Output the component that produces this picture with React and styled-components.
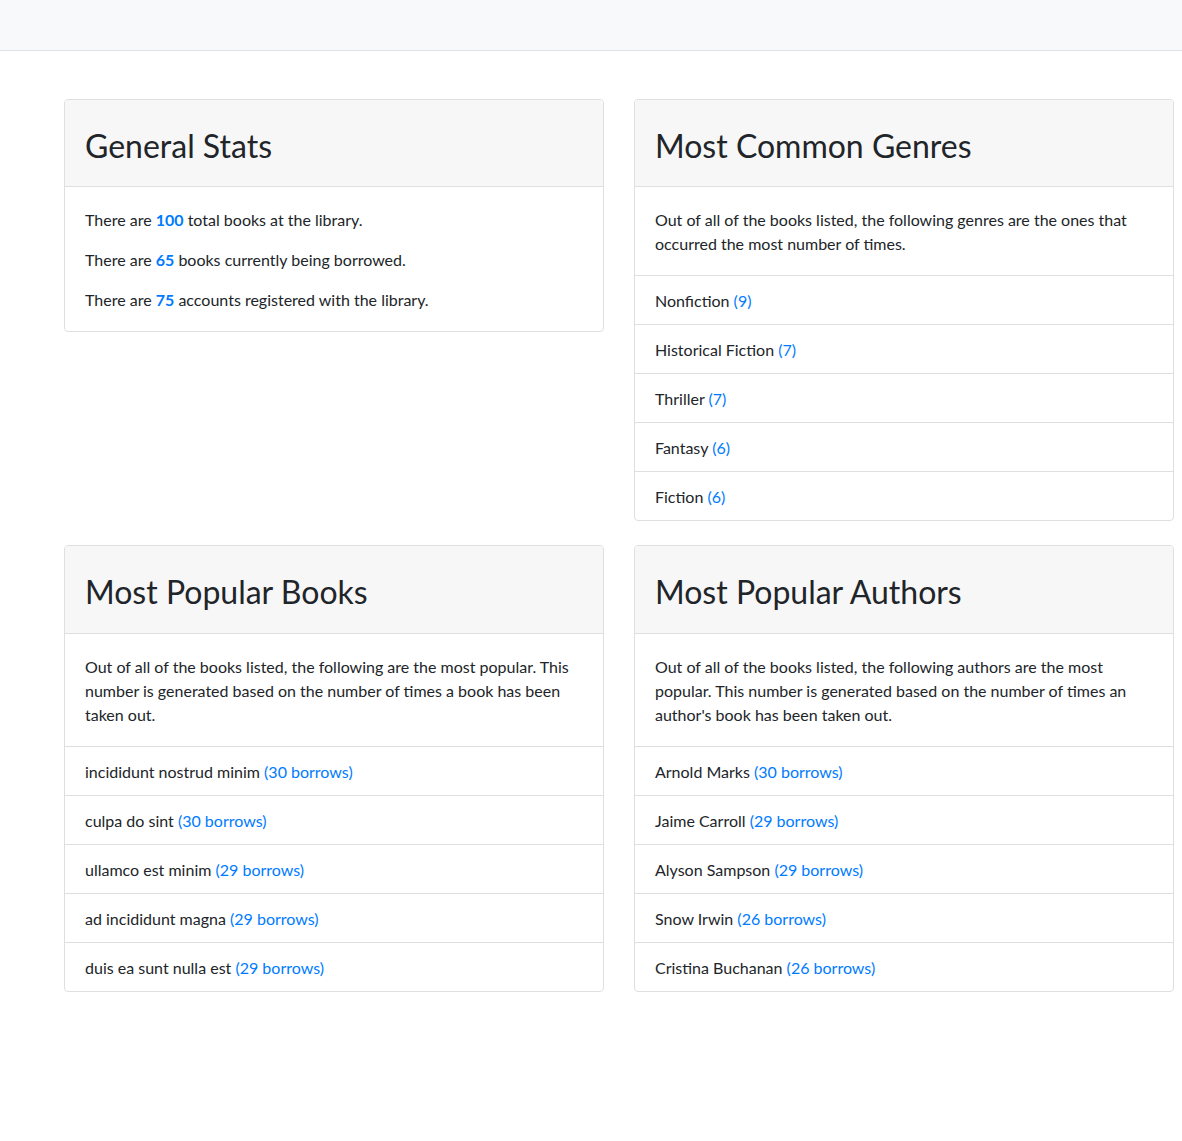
import React from 'react';
import styled, { createGlobalStyle } from 'styled-components';

const genres = [
  { name: 'Nonfiction', count: 9 },
  { name: 'Historical Fiction', count: 7 },
  { name: 'Thriller', count: 7 },
  { name: 'Fantasy', count: 6 },
  { name: 'Fiction', count: 6 },
];

const books = [
  { name: 'incididunt nostrud minim', count: 30 },
  { name: 'culpa do sint', count: 30 },
  { name: 'ullamco est minim', count: 29 },
  { name: 'ad incididunt magna', count: 29 },
  { name: 'duis ea sunt nulla est', count: 29 },
];

const authors = [
  { name: 'Arnold Marks', count: 30 },
  { name: 'Jaime Carroll', count: 29 },
  { name: 'Alyson Sampson', count: 29 },
  { name: 'Snow Irwin', count: 26 },
  { name: 'Cristina Buchanan', count: 26 },
];

const App = () => {
  return (
    <>
      <GlobalStyle />
      <Navbar />
      <Main>
        <Card>
          <CardHeader>
            <Title>General Stats</Title>
          </CardHeader>
          <CardBody>
            <Text>
              There are <Strong>100</Strong> total books at the library.
            </Text>
            <Text>
              There are <Strong>65</Strong> books currently being borrowed.
            </Text>
            <Text>
              There are <Strong>75</Strong> accounts registered with the library.
            </Text>
          </CardBody>
        </Card>

        <Card>
          <CardHeader>
            <Title>Most Common Genres</Title>
          </CardHeader>
          <CardBody>
            <Text>
              Out of all of the books listed, the following genres are the ones that occurred the
              most number of times.
            </Text>
          </CardBody>
          <List>
            {genres.map((g) => (
              <Item key={g.name}>
                {g.name} <Count>({g.count})</Count>
              </Item>
            ))}
          </List>
        </Card>

        <Card>
          <CardHeader>
            <Title>Most Popular Books</Title>
          </CardHeader>
          <CardBody>
            <Text>
              Out of all of the books listed, the following are the most popular. This number is
              generated based on the number of times a book has been taken out.
            </Text>
          </CardBody>
          <List>
            {books.map((b) => (
              <Item key={b.name}>
                {b.name} <Count>({b.count} borrows)</Count>
              </Item>
            ))}
          </List>
        </Card>

        <Card>
          <CardHeader>
            <Title>Most Popular Authors</Title>
          </CardHeader>
          <CardBody>
            <Text>
              Out of all of the books listed, the following authors are the most popular. This
              number is generated based on the number of times an author's book has been taken
              out.
            </Text>
          </CardBody>
          <List>
            {authors.map((a) => (
              <Item key={a.name}>
                {a.name} <Count>({a.count} borrows)</Count>
              </Item>
            ))}
          </List>
        </Card>
      </Main>
    </>
  );
};

export default App;

const GlobalStyle = createGlobalStyle`
  * {
    box-sizing: border-box;
  }

  body {
    margin: 0;
    background: #fff;
    color: #212529;
    font-family: Lato, 'Noto Sans', sans-serif;
    font-size: 16px;
    line-height: 1.5;
  }
`;

const Navbar = styled.nav`
  height: 51px;
  background: #f8f9fa;
  border-bottom: 1px solid #dee2e6;
`;

const Main = styled.main`
  display: grid;
  grid-template-columns: 540px 540px;
  column-gap: 30px;
  row-gap: 24px;
  align-items: start;
  padding: 48px 0 0 64px;
`;

const Card = styled.section`
  border: 1px solid #dfdfdf;
  border-radius: 4px;
  overflow: hidden;
  background: #fff;
`;

const CardHeader = styled.header`
  padding: 27px 20px 21px;
  background: #f7f7f7;
  border-bottom: 1px solid #dfdfdf;
`;

const Title = styled.h2`
  margin: 0;
  font-size: 32px;
  font-weight: 400;
  line-height: 38.4px;
  color: #212529;
`;

const CardBody = styled.div`
  padding: 21px 20px 19px;
`;

const Text = styled.p`
  margin: 0 0 16px;
  line-height: 24px;

  &:last-child {
    margin-bottom: 0;
  }
`;

const Strong = styled.strong`
  color: #007bff;
  font-weight: 700;
`;

const List = styled.ul`
  margin: 0;
  padding: 0;
  list-style: none;
`;

const Item = styled.li`
  padding: 13px 20px 11px;
  line-height: 24px;
  border-top: 1px solid #dfdfdf;
`;

const Count = styled.span`
  color: #007bff;
`;
